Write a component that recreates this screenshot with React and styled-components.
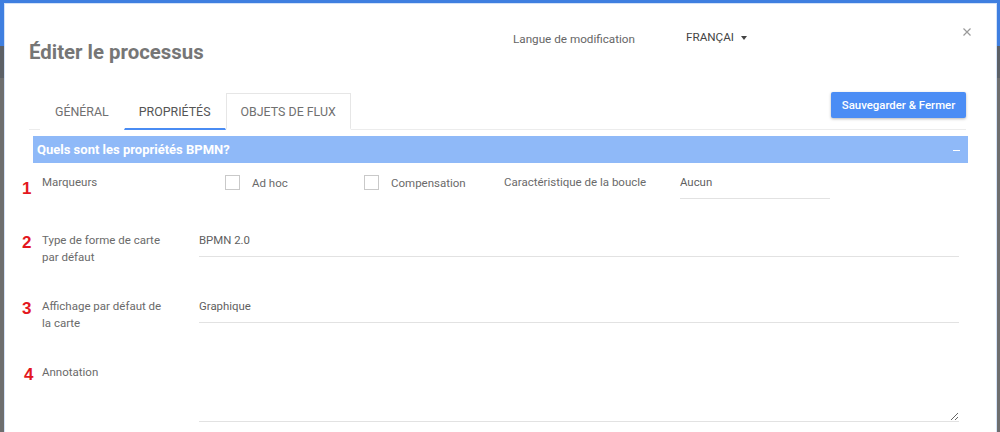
import React from "react";
import styled, { createGlobalStyle } from "styled-components";

const Global = createGlobalStyle`
  html, body { margin: 0; padding: 0; }
  body { font-family: Roboto, "Liberation Sans", Arial, sans-serif; overflow: hidden; }
  * { box-sizing: border-box; }
`;

const Backdrop = styled.div`
  position: relative;
  width: 1000px;
  height: 432px;
  overflow: hidden;
  background: #6e6e6e;
  display: flex;
  flex-direction: column;
`;

const AppBar = styled.div`
  height: 46px;
  background: #3f7fe0;
`;

const SubBar = styled.div`
  height: 32px;
  background: #5c6066;
`;

const Modal = styled.div`
  position: absolute;
  left: 5px;
  top: 4px;
  width: 991px;
  height: 460px;
  background: #fff;
  box-shadow: 0 0 0 1px #d3e2f8;
  display: flex;
  flex-direction: column;
`;

const Header = styled.div`
  height: 89px;
  display: grid;
  grid-template-columns: 484px 173px 1fr auto;
  align-items: start;
  padding: 0 25px 0 24px;
`;

const Title = styled.h1`
  margin: 36px 0 0;
  font-size: 20.4px;
  line-height: 24px;
  font-weight: 700;
  color: #767676;
`;

const LangLabel = styled.div`
  margin-top: 27px;
  font-size: 11.7px;
  line-height: 17px;
  color: #666;
`;

const LangSelect = styled.div`
  margin-top: 25px;
  font-size: 11.7px;
  line-height: 17px;
  color: #444;
  display: flex;
  align-items: center;
  gap: 7px;
`;

const Caret = styled.span`
  width: 0;
  height: 0;
  border-left: 3.5px solid transparent;
  border-right: 3.5px solid transparent;
  border-top: 4px solid #444;
`;

const Close = styled.button`
  margin-top: 24px;
  width: 8px;
  height: 8px;
  padding: 0;
  border: 0;
  background: none;
  display: flex;
`;

const TabRow = styled.div`
  margin: 0 30px 0 24px;
  height: 37px;
  display: flex;
  justify-content: space-between;
  align-items: flex-start;
  box-shadow: inset 0 -1px 0 #ececec;
`;

const TabList = styled.div`
  display: flex;
  margin-left: 11px;
`;

const Tab = styled.div`
  height: 37px;
  padding: 0 14px;
  display: flex;
  align-items: center;
  font-size: 12.4px;
  text-transform: uppercase;
  color: ${(p) => (p.$active ? "#555" : "#707070")};
  border-bottom: 2px solid ${(p) => (p.$active ? "#4a8cf3" : "transparent")};
  border-top: 1px solid ${(p) => (p.$boxed ? "#e6e6e6" : "transparent")};
  border-left: 1px solid ${(p) => (p.$boxed ? "#e6e6e6" : "transparent")};
  border-right: 1px solid ${(p) => (p.$boxed ? "#e6e6e6" : "transparent")};
  background: #fff;
`;

const SaveButton = styled.button`
  margin-top: -1px;
  height: 26px;
  width: 135px;
  border: 0;
  border-radius: 2px;
  background: #4b8df5;
  color: #fff;
  font-family: Roboto, "Liberation Sans", Arial, sans-serif;
  font-size: 11.4px;
  font-weight: 500;
  box-shadow: 0 1px 3px rgba(0, 0, 0, 0.28);
`;

const Section = styled.div`
  margin: 6px 28px 0 28px;
  height: 27px;
  background: #8fb9f8;
  display: flex;
  align-items: center;
  justify-content: space-between;
  padding: 0 8px 0 4px;
  color: #fff;
  font-size: 13px;
  font-weight: 700;
`;

const Dash = styled.span`
  width: 7px;
  height: 1px;
  background: #fff;
  margin-top: 2px;
`;

const Form = styled.div`
  margin: 11px 37px 0 17px;
  display: flex;
  flex-direction: column;
  gap: 32px;
`;

const Row = styled.div`
  display: grid;
  grid-template-columns: 20px 157px 1fr;
  align-items: start;
  min-height: ${(p) => p.$minH || 0}px;
`;

const Num = styled.span`
  margin-top: ${(p) => p.$dy}px;
  padding-left: ${(p) => p.$dx || 0}px;
  font-family: "Liberation Sans", Arial, sans-serif;
  font-weight: 700;
  font-size: 17px;
  line-height: 17px;
  color: #e3171e;
`;

const Label = styled.div`
  font-size: 11.5px;
  line-height: 17px;
  color: #6a6a6a;
  padding-right: 30px;
`;

const MarkerLine = styled.div`
  display: flex;
  align-items: flex-start;
  padding-left: 26px;
`;

const CheckGroup = styled.label`
  width: ${(p) => p.$w}px;
  display: flex;
  align-items: center;
  gap: 12px;
  height: 17px;
  font-size: 11.5px;
  color: #6a6a6a;
`;

const Box = styled.span`
  width: 15px;
  height: 15px;
  border: 1px solid #c9c9c9;
  background: #fff;
  flex: none;
`;

const InlineLabel = styled.div`
  width: 176px;
  font-size: 11.5px;
  line-height: 17px;
  color: #6a6a6a;
`;

const Field = styled.div`
  width: ${(p) => (p.$w ? `${p.$w}px` : "auto")};
  font-size: 11.4px;
  line-height: 17px;
  color: #5f5f5f;
  padding-bottom: 7px;
  border-bottom: 1px solid #e2e2e2;
`;

const Area = styled.textarea`
  display: block;
  width: 100%;
  height: 58px;
  border: 0;
  border-bottom: 1px solid #e2e2e2;
  resize: vertical;
  outline: none;
  font-family: Roboto, "Liberation Sans", Arial, sans-serif;
  font-size: 12px;
  padding: 0;
`;

export default function App() {
  return (
    <>
      <Global />
      <Backdrop>
        <AppBar />
        <SubBar />
        <Modal>
          <Header>
            <Title>Éditer le processus</Title>
            <LangLabel>Langue de modification</LangLabel>
            <LangSelect>
              FRANÇAI <Caret />
            </LangSelect>
            <Close aria-label="Fermer">
              <svg width="8" height="8" viewBox="0 0 8 8">
                <path d="M0.5 0.5 L7.5 7.5 M7.5 0.5 L0.5 7.5" stroke="#9a9a9a" strokeWidth="1.2" />
              </svg>
            </Close>
          </Header>
          <TabRow>
            <TabList>
              <Tab>Général</Tab>
              <Tab $active>Propriétés</Tab>
              <Tab $boxed>Objets de flux</Tab>
            </TabList>
            <SaveButton>Sauvegarder &amp; Fermer</SaveButton>
          </TabRow>
          <Section>
            <span>Quels sont les propriétés BPMN?</span>
            <Dash />
          </Section>
          <Form>
            <Row $minH={26}>
              <Num $dy={6}>1</Num>
              <Label>Marqueurs</Label>
              <MarkerLine>
                <CheckGroup $w={139}>
                  <Box />
                  Ad hoc
                </CheckGroup>
                <CheckGroup $w={140}>
                  <Box />
                  Compensation
                </CheckGroup>
                <InlineLabel>Caractéristique de la boucle</InlineLabel>
                <Field $w={150}>Aucun</Field>
              </MarkerLine>
            </Row>
            <Row>
              <Num $dy={2}>2</Num>
              <Label>Type de forme de carte par défaut</Label>
              <Field>BPMN 2.0</Field>
            </Row>
            <Row>
              <Num $dy={2}>3</Num>
              <Label>Affichage par défaut de la carte</Label>
              <Field>Graphique</Field>
            </Row>
            <Row>
              <Num $dy={2} $dx={2}>4</Num>
              <Label>Annotation</Label>
              <Area />
            </Row>
          </Form>
        </Modal>
      </Backdrop>
    </>
  );
}
